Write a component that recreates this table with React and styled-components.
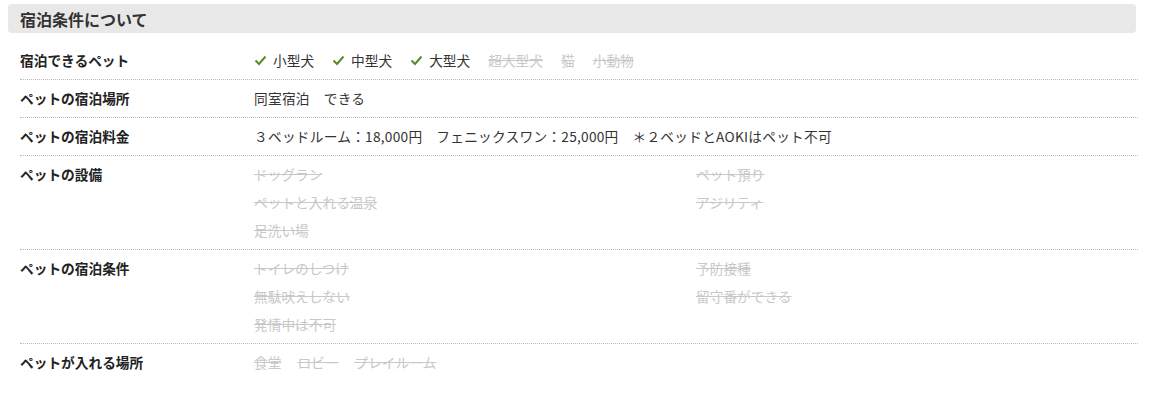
import React from "react";
import styled, { createGlobalStyle } from "styled-components";

const GlobalStyle = createGlobalStyle`
  body {
    margin: 0;
    background: #fff;
    font-family: "Noto Sans CJK JP", "Noto Sans", sans-serif;
    color: #333;
  }
`;

const Section = styled.section`
  padding: 4px 15px 0 8px;
`;

const Heading = styled.h2`
  margin: 0 0 9px;
  height: 29px;
  display: flex;
  align-items: center;
  padding-left: 12px;
  background: #e8e8e8;
  border-radius: 4px;
  font-size: 16px;
  font-weight: 700;
  color: #333;
`;

const Table = styled.div`
  margin-left: 12px;
  margin-right: -2px;
`;

const Row = styled.div`
  display: grid;
  grid-template-columns: 234px 1fr;
  padding: 8px 0 9px;
  border-bottom: 1px dotted #bbb;
  font-size: 13.7px;
  line-height: 20px;

  &:last-child {
    border-bottom: none;
  }
`;

const Label = styled.div`
  font-weight: 700;
  color: #222;
`;

const Inline = styled.div`
  display: flex;
  gap: ${(p) => p.$gap || 16}px;
  white-space: nowrap;
`;

const Columns = styled.div`
  display: grid;
  grid-template-columns: 1fr 1fr;
  row-gap: 8px;
`;

const Item = styled.span`
  display: inline-flex;
  align-items: center;
  gap: 6px;
  color: ${(p) => (p.$off ? "#c8c8c8" : "#333")};
  text-decoration: ${(p) => (p.$off ? "line-through" : "none")};
`;

const Text = styled.div`
  color: #333;
  white-space: pre;
  letter-spacing: 0.25px;
`;

const Check = () => (
  <svg width="13" height="11" viewBox="0 0 13 11">
    <polyline points="1.5,5.5 5,9 11.5,1.5" fill="none" stroke="#5a8a2c" strokeWidth="2" />
  </svg>
);

const pets = [
  ["小型犬", true],
  ["中型犬", true],
  ["大型犬", true],
  ["超大型犬", false],
  ["猫", false],
  ["小動物", false],
];

const facilities = [["ドッグラン", "ペット預り"], ["ペットと入れる温泉", "アジリティ"], ["足洗い場"]];
const conditions = [["トイレのしつけ", "予防接種"], ["無駄吠えしない", "留守番ができる"], ["発情中は不可"]];
const places = ["食堂", "ロビー", "プレイルーム"];

const Grid = ({ rows }) => (
  <Columns>
    {rows.flat().map((t) => (
      <Item key={t} $off>
        {t}
      </Item>
    ))}
  </Columns>
);

export default function App() {
  return (
    <>
      <GlobalStyle />
      <Section>
        <Heading>宿泊条件について</Heading>
        <Table>
          <Row>
            <Label>宿泊できるペット</Label>
            <Inline $gap={18}>
              {pets.map(([name, ok]) => (
                <Item key={name} $off={!ok}>
                  {ok && <Check />}
                  {name}
                </Item>
              ))}
            </Inline>
          </Row>
          <Row>
            <Label>ペットの宿泊場所</Label>
            <Text>同室宿泊　できる</Text>
          </Row>
          <Row>
            <Label>ペットの宿泊料金</Label>
            <Text>３ベッドルーム：18,000円　フェニックスワン：25,000円　＊２ベッドとAOKIはペット不可</Text>
          </Row>
          <Row>
            <Label>ペットの設備</Label>
            <Grid rows={facilities} />
          </Row>
          <Row>
            <Label>ペットの宿泊条件</Label>
            <Grid rows={conditions} />
          </Row>
          <Row>
            <Label>ペットが入れる場所</Label>
            <Inline>
              {places.map((p) => (
                <Item key={p} $off>
                  {p}
                </Item>
              ))}
            </Inline>
          </Row>
        </Table>
      </Section>
    </>
  );
}
